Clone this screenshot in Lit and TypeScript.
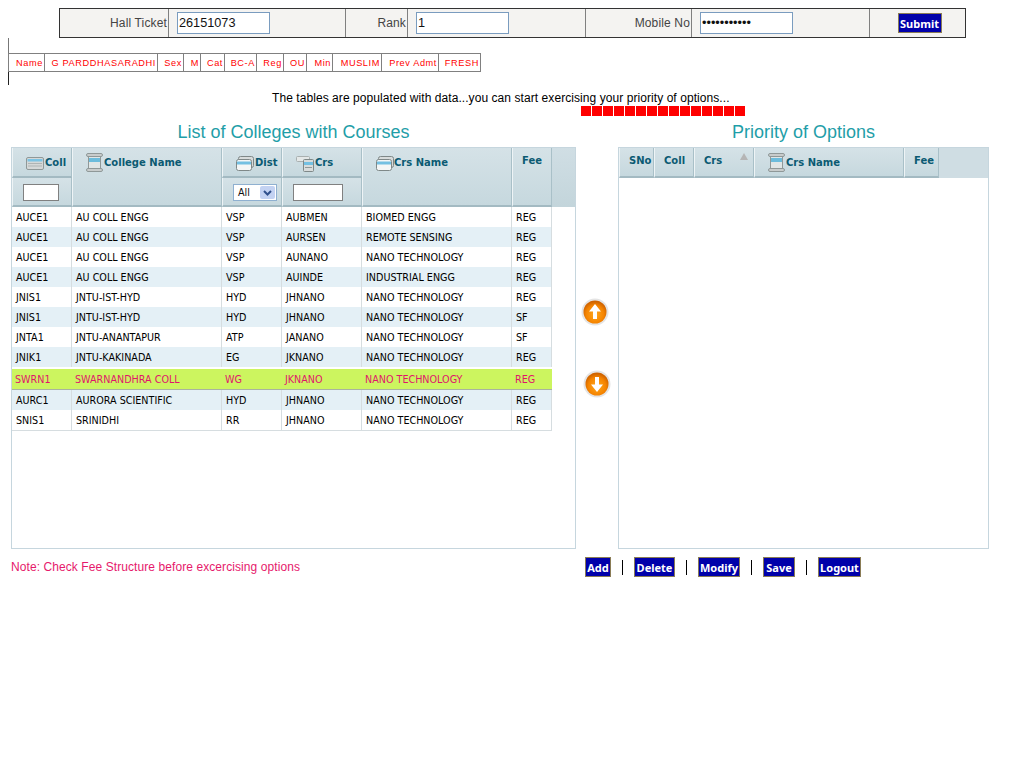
import { LitElement, html, css, svg } from "lit";
import { customElement } from "lit/decorators.js";

const card = () => svg`<svg class="ic" width="18" height="15" viewBox="0 0 18 15"><rect x="0.5" y="1.5" width="17" height="12" rx="1.5" fill="#d5d8d8" stroke="#8f9898"/><rect x="1.5" y="3" width="15" height="2.5" fill="#7cc4e4"/><rect x="2" y="7" width="14" height="1" fill="#aeb4b4"/><rect x="2" y="9.5" width="14" height="1" fill="#aeb4b4"/></svg>`;
const scroll = () => svg`<svg class="ic" width="17" height="19" viewBox="0 0 17 19"><rect x="2.5" y="1.5" width="12" height="16" fill="#e0e6e6" stroke="#8f9898"/><rect x="0.5" y="0.5" width="16" height="3" rx="1.5" fill="#c8cccc" stroke="#8f9898"/><rect x="0.5" y="15.5" width="16" height="3" rx="1.5" fill="#c8cccc" stroke="#8f9898"/><rect x="3" y="5" width="11" height="4" fill="#6cbcdc"/></svg>`;
const win = () => svg`<svg class="ic" width="18" height="15" viewBox="0 0 18 15"><rect x="2.5" y="0.5" width="15" height="11" rx="2" fill="#d8dcdc" stroke="#7f8888"/><rect x="0.5" y="3.5" width="15" height="11" rx="2" fill="#f4f6f6" stroke="#7f8888"/><rect x="1" y="5.5" width="14" height="3" fill="#74c0e2"/></svg>`;
const stack = () => svg`<svg class="ic" width="18" height="16" viewBox="0 0 18 16"><rect x="0.5" y="0.5" width="13" height="5" rx="1" fill="#e4e8e8" stroke="#a9b0b0"/><rect x="7.5" y="3.5" width="10" height="12" rx="1" fill="#d8dcdc" stroke="#7f8888"/><rect x="8" y="6" width="9" height="3" fill="#74c0e2"/><rect x="9" y="11" width="7" height="1" fill="#8f9898"/></svg>`;

const arrow = (dir: "up" | "down") => svg`<svg width="28" height="28" viewBox="0 0 28 28">
  <defs><radialGradient id="o${dir}" cx="50%" cy="60%" r="55%"><stop offset="0" stop-color="#ffa81e"/><stop offset="0.7" stop-color="#f58400"/><stop offset="1" stop-color="#d06400"/></radialGradient></defs>
  <circle cx="14" cy="14" r="13.5" fill="#e4e4e4"/><circle cx="14" cy="14" r="11.5" fill="url(#o${dir})"/>
  <path fill="#fff" transform="${dir === "down" ? "rotate(180 14 14)" : ""}" d="M14 6 L20 13.5 H16 V21 H12 V13.5 H8 Z"/></svg>`;

const rows = [
  ["AUCE1","AU COLL ENGG","VSP","AUBMEN","BIOMED ENGG","REG"],
  ["AUCE1","AU COLL ENGG","VSP","AURSEN","REMOTE SENSING","REG"],
  ["AUCE1","AU COLL ENGG","VSP","AUNANO","NANO TECHNOLOGY","REG"],
  ["AUCE1","AU COLL ENGG","VSP","AUINDE","INDUSTRIAL ENGG","REG"],
  ["JNIS1","JNTU-IST-HYD","HYD","JHNANO","NANO TECHNOLOGY","REG"],
  ["JNIS1","JNTU-IST-HYD","HYD","JHNANO","NANO TECHNOLOGY","SF"],
  ["JNTA1","JNTU-ANANTAPUR","ATP","JANANO","NANO TECHNOLOGY","SF"],
  ["JNIK1","JNTU-KAKINADA","EG","JKNANO","NANO TECHNOLOGY","REG"],
  ["SWRN1","SWARNANDHRA COLL","WG","JKNANO","NANO TECHNOLOGY","REG"],
  ["AURC1","AURORA SCIENTIFIC","HYD","JHNANO","NANO TECHNOLOGY","REG"],
  ["SNIS1","SRINIDHI","RR","JHNANO","NANO TECHNOLOGY","REG"],
];
const info = ["Name","G PARDDHASARADHI","Sex","M","Cat","BC-A","Reg","OU","Min","MUSLIM","Prev Admt","FRESH"];

@customElement("app-root")
export class AppRoot extends LitElement {
  static styles = css`
    :host { display: block; width: 1024px; height: 768px; background: #fff; font-family: "Liberation Sans", Arial, sans-serif; overflow: hidden; }
    .top { display: grid; grid-template-columns: 109px 177px 62px 178px 106px 178px 95px; width: 907px; height: 30px; box-sizing: border-box; margin: 8px 0 0 59px; border: 1px solid #333; background: #f4f3f1; }
    .top > div { display: flex; align-items: center; box-sizing: border-box; border-right: 1px solid #808080; font-size: 12px; letter-spacing: 0.15px; color: #444; }
    .top > div:last-child { border-right: 0; justify-content: center; padding-left: 4px; }
    .top .lab { justify-content: flex-end; padding-right: 1px; }
    .top .fld { padding-left: 8px; }
    .top input { width: 93px; height: 22px; box-sizing: border-box; border: 1px solid #7a9cbf; padding: 0 0 0 1px; font: 12.7px "Liberation Sans", Arial, sans-serif; color: #111; background: #fff; outline: none; }
    .tick { width: 1px; background: #777; margin-left: 8px; }
    .t1 { height: 15px; }
    .t2 { height: 13px; background: #222; }
    .info { display: grid; grid-template-columns: 36px 113px 26px 17px 24px 32px 27px 23px 26px 49px 57px 42px; width: 473px; height: 19px; box-sizing: border-box; margin-left: 8px; border: 1px solid #808080; border-right: 0; }
    .info span { display: flex; align-items: center; justify-content: flex-end; box-sizing: border-box; border-right: 1px solid #808080; padding-right: 1px; font-size: 9.2px; letter-spacing: 0.6px; color: #f00; white-space: nowrap; overflow: hidden; }
    .msg { margin: 6px 0 0 272px; font-size: 12px; letter-spacing: 0.067px; line-height: 14px; color: #000; white-space: nowrap; }
    .blocks { display: flex; gap: 1px; margin: 1px 0 0 581px; height: 10px; }
    .blocks i { width: 10px; background: #f00; display: block; }
    .titles { display: grid; grid-template-columns: 607px 371px; margin: 6px 0 0 11px; height: 25px; }
    .titles div { font-size: 18px; line-height: 20px; color: #1f9ea8; white-space: nowrap; text-align: center; }
    .titles .l { width: 565px; }
    .main { display: flex; margin-left: 11px; }
    .panel { box-sizing: border-box; height: 402px; border: 1px solid #c6d6de; background: #fff; font-family: "DejaVu Sans", Verdana, sans-serif; }
    .left { width: 565px; }
    .right { width: 371px; }
    .mid { width: 42px; display: flex; flex-direction: column; }
    .mid svg { display: block; }
    .mid .u { margin: 151px 0 0 5px; }
    .mid .d { margin: 44px 0 0 7px; }
    .hl { display: grid; grid-template-columns: 60px 150px 60px 80px 150px 40px; grid-template-rows: 30px 29px; background: linear-gradient(#d0dee4, #c3d5db); }
    .hr { display: grid; grid-template-columns: 35px 40px 60px 150px 35px; height: 30px; background: #cfdde3; }
    .hc { box-sizing: border-box; display: flex; align-items: flex-start; justify-content: flex-start; gap: 1px; padding: 8px 0 0 13px; border-left: 1px solid #eef4f6; border-right: 1px solid #a9c0c8; border-bottom: 2px solid #a3bac2; background: linear-gradient(#d5e2e7, #c6d8de); font-size: 10px; font-weight: 700; line-height: 14px; color: #0b5a72; white-space: nowrap; position: relative; }
    .ic { flex: none; display: block; margin-top: 0; }
    .c-name { grid-column: 2; grid-row: 1 / span 2; padding-top: 5px; }
    .c-name b { margin-top: 3px; font-weight: 700; }
    .c-crs { grid-column: 5; grid-row: 1 / span 2; gap: 0; }
    .c-fee { grid-column: 6; grid-row: 1 / span 2; padding: 6px 0 0 9px; }
    .plain { padding: 6px 0 0 9px; }
    .f { align-items: center; justify-content: center; padding: 1px 0 0; }
    .f input { box-sizing: border-box; height: 17px; border: 1px solid #808080; background: #fff; padding: 0; outline: none; }
    .w36 { width: 36px; margin-right: 2px; }
    .w50 { width: 50px; margin-right: 8px; }
    .sel { position: relative; box-sizing: border-box; width: 44px; height: 17px; margin-left: 6px; border: 1px solid #8fb0d0; background: #fff; display: flex; align-items: center; }
    .sel span { font-size: 9.6px; font-weight: 400; line-height: 16px; color: #111; padding: 1px 0 0 4px; }
    .sel svg { position: absolute; right: 1px; top: 1px; }
    .rows { border-bottom: 1px solid #d6dde0; width: 540px; }
    .row { display: grid; grid-template-columns: 60px 150px 60px 80px 150px 40px; height: 20px; font-size: 9.6px; color: #000; }
    .row:nth-child(even) { background: #e4f0f6; }
    .row span { box-sizing: border-box; display: flex; align-items: center; padding-left: 4px; border-right: 1px solid #d6dde0; white-space: nowrap; overflow: hidden; }
    .row.on { background: #ccf55f; color: #e0156b; height: 21px; margin-top: 2px; border-bottom: 1px solid #a9b3a0; box-sizing: border-box; }
    .row.on span { border-right: 0; padding-left: 3px; }
    .foot { display: flex; margin: 8px 0 0 11px; align-items: center; }
    .note { width: 574px; font-size: 12px; letter-spacing: 0.08px; color: #e6196b; margin-top: -1px; }
    .btns { display: flex; gap: 11px; align-items: center; }
    .btn { box-sizing: border-box; height: 20px; padding: 0; border: 1px solid #8a7c56; background: #0000aa; color: #fff; font: 700 11px "Noto Sans", Verdana, sans-serif; display: flex; align-items: center; justify-content: center; }
    .sep { width: 1px; height: 15px; background: #000; }
    .sort { position: absolute; right: 5px; top: 5px; width: 0; height: 0; border-left: 4px solid transparent; border-right: 4px solid transparent; border-bottom: 7px solid #b5b5b5; }
  `;

  render() {
    return html`
      <div class="top">
        <div class="lab">Hall Ticket</div>
        <div class="fld"><input value="26151073" /></div>
        <div class="lab">Rank</div>
        <div class="fld"><input value="1" /></div>
        <div class="lab">Mobile No</div>
        <div class="fld"><input type="password" value="98765432101" /></div>
        <div><button class="btn" style="width:44px">Submit</button></div>
      </div>
      <div class="tick t1"></div>
      <div class="info">${info.map((t) => html`<span>${t}</span>`)}</div>
      <div class="tick t2"></div>
      <div class="msg">The tables are populated with data...you can start exercising your priority of options...</div>
      <div class="blocks">${Array.from({ length: 15 }, () => html`<i></i>`)}</div>
      <div class="titles"><div class="l">List of Colleges with Courses</div><div class="r">Priority of Options</div></div>
      <div class="main">
        <div class="panel left">
          <div class="hl">
            <div class="hc">${card()}Coll</div>
            <div class="hc c-name">${scroll()}<b>College Name</b></div>
            <div class="hc">${win()}Dist</div>
            <div class="hc">${stack()}Crs</div>
            <div class="hc c-crs">${win()}Crs Name</div>
            <div class="hc c-fee">Fee</div>
            <div class="hc f"><input class="w36" /></div>
            <div class="hc f" style="grid-column:3"><div class="sel"><span>All</span>
              <svg width="15" height="13" viewBox="0 0 15 13"><rect width="15" height="13" rx="2" fill="#c3d2f2"/><path d="M4 5 L7.5 8.5 L11 5" fill="none" stroke="#30508c" stroke-width="2"/></svg></div></div>
            <div class="hc f" style="grid-column:4"><input class="w50" /></div>
          </div>
          <div class="rows">
            ${rows.map((r, i) => html`<div class="row ${i === 8 ? "on" : ""}">${r.map((c) => html`<span>${c}</span>`)}</div>`)}
          </div>
        </div>
        <div class="mid"><div class="u">${arrow("up")}</div><div class="d">${arrow("down")}</div></div>
        <div class="panel right">
          <div class="hr">
            <div class="hc plain">SNo</div>
            <div class="hc plain">Coll</div>
            <div class="hc plain">Crs<i class="sort"></i></div>
            <div class="hc c-name" style="grid-column:auto;grid-row:auto">${scroll()}<b>Crs Name</b></div>
            <div class="hc plain">Fee</div>
          </div>
        </div>
      </div>
      <div class="foot">
        <div class="note">Note: Check Fee Structure before excercising options</div>
        <div class="btns">
          <button class="btn" style="width:26px">Add</button><i class="sep"></i>
          <button class="btn" style="width:41px">Delete</button><i class="sep"></i>
          <button class="btn" style="width:42px">Modify</button><i class="sep"></i>
          <button class="btn" style="width:32px">Save</button><i class="sep"></i>
          <button class="btn" style="width:43px">Logout</button>
        </div>
      </div>
    `;
  }
}
